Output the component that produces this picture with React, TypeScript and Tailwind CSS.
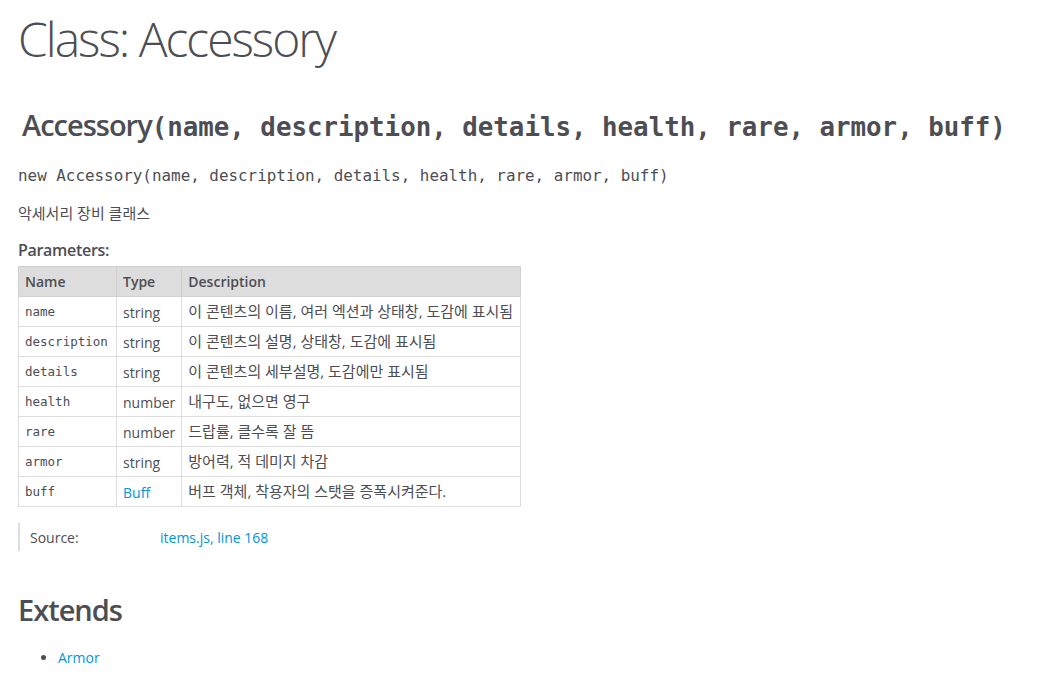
import React from 'react';

const mono = "font-['DejaVu_Sans_Mono',monospace]";
const sans = "font-['Open_Sans','Noto_Sans_CJK_KR',sans-serif]";

const params = [
  { name: 'name', type: 'string', desc: '이 콘텐츠의 이름, 여러 엑션과 상태창, 도감에 표시됨' },
  { name: 'description', type: 'string', desc: '이 콘텐츠의 설명, 상태창, 도감에 표시됨' },
  { name: 'details', type: 'string', desc: '이 콘텐츠의 세부설명, 도감에만 표시됨' },
  { name: 'health', type: 'number', desc: '내구도, 없으면 영구' },
  { name: 'rare', type: 'number', desc: '드랍률, 클수록 잘 뜸' },
  { name: 'armor', type: 'string', desc: '방어력, 적 데미지 차감' },
  { name: 'buff', type: 'Buff', desc: '버프 객체, 착용자의 스탯을 증폭시켜준다.', link: true },
];

export default function App() {
  return (
    <div className={`${sans} min-h-[682px] w-[1040px] bg-white text-[#4d4e53] text-[14px] px-[18px]`}>
      {/* Page title */}
      <h1 className="pt-[9px] text-[48px] font-light tracking-[-2px] leading-[60px] text-[#4d4e53]">Class: Accessory</h1>

      {/* Constructor signature */}
      <h4 className="mt-[36px] pl-[4px] leading-[40px] text-[#4d4e53]">
        <span className={`${sans} text-[29px] font-semibold tracking-[-1px]`}>Accessory</span>
        <span className={`${mono} text-[25.8px] font-bold`}>(name, description, details, health, rare, armor, buff)</span>
      </h4>

      <div className={`${mono} mt-[15px] text-[15.9px] leading-[20px]`}>new Accessory(name, description, details, health, rare, armor, buff)</div>

      <p className="mt-[17px] text-[15px] leading-[20px]">악세서리 장비 클래스</p>

      <h5 className="mt-[17px] text-[16px] font-semibold leading-[20px] tracking-[-0.3px]">Parameters:</h5>

      {/* Params table */}
      <table className="mt-[6px] border-collapse text-[14px]">
        <thead>
          <tr className="bg-[#dddddd] h-[30px]">
            <th className="w-[98px] border border-[#d0d0d0] px-[6px] text-left font-semibold">Name</th>
            <th className="w-[65px] border border-[#d0d0d0] px-[6px] text-left font-semibold">Type</th>
            <th className="border border-[#d0d0d0] px-[6px] text-left font-semibold">Description</th>
          </tr>
        </thead>
        <tbody>
          {params.map((p) => (
            <tr key={p.name} className="h-[30px]">
              <td className={`${mono} border border-[#dddddd] px-[6px] pt-[1px] text-[12.5px]`}>{p.name}</td>
              <td className={`border border-[#dddddd] px-[6px] pt-[1px] ${p.link ? 'text-[#0095dd]' : ''}`}>{p.type}</td>
              <td className="border border-[#dddddd] px-[6px] pr-[7px] text-[15px]">{p.desc}</td>
            </tr>
          ))}
        </tbody>
      </table>

      {/* Source */}
      <dl className="mt-[16px] flex border-l-[2px] border-[#dddddd] pl-[10px] h-[28px] items-center">
        <dt className="w-[130px]">Source:</dt>
        <dd className="text-[#0095dd]">items.js, line 168</dd>
      </dl>

      {/* Extends */}
      <h3 className="mt-[41px] text-[29px] font-semibold tracking-[-1px] leading-[36px]">Extends</h3>
      <ul className="mt-[19px] list-disc pl-[40px] marker:text-[#4d4e53]">
        <li className="text-[#0095dd]">Armor</li>
      </ul>
    </div>
  );
}
